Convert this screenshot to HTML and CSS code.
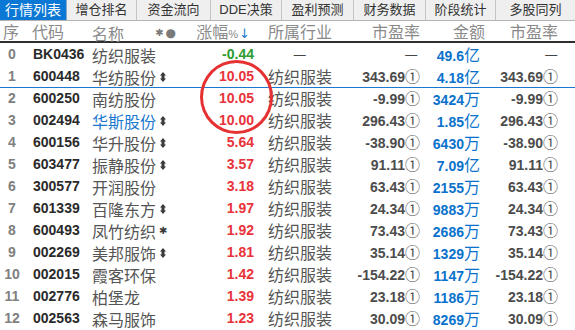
FILE: index.html
```html
<!DOCTYPE html>
<html lang="zh-CN">
<head>
    <meta charset="UTF-8">
    <title>行情列表</title>
    <link rel="stylesheet" href="styles.css">
</head>
<body>
    <div class="tabs">
        <div class="tab active" style="width:67px">行情列表</div>
        <div class="tab" style="width:70px">增仓排名</div>
        <div class="tab" style="width:74px">资金流向</div>
        <div class="tab" style="width:71px">DDE决策</div>
        <div class="tab" style="width:72px">盈利预测</div>
        <div class="tab" style="width:72px">财务数据</div>
        <div class="tab" style="width:70px">阶段统计</div>
        <div class="tab last">多股同列</div>
    </div>

    <div class="board">
        <div class="row head">
            <div class="c-no">序</div>
            <div class="c-code">代码</div>
            <div class="c-name"><span>名称</span><span class="flags"><span class="star">✱</span><span class="dot">●</span></span></div>
            <div class="c-pct">涨幅<span class="pct">%</span><span class="arrow">↓</span></div>
            <div class="c-ind">所属行业</div>
            <div class="c-pe">市盈率</div>
            <div class="c-amt">金额</div>
            <div class="c-pe2">市盈率</div>
        </div>

        <div class="row">
            <div class="c-no">0</div>
            <div class="c-code">BK0436</div>
            <div class="c-name">纺织服装</div>
            <div class="c-pct down">-0.44</div>
            <div class="c-ind dash mid">—</div>
            <div class="c-pe dash">—</div>
            <div class="c-amt">49.6<span class="unit">亿</span></div>
            <div class="c-pe2 dash">—</div>
        </div>
        <div class="row">
            <div class="c-no">1</div>
            <div class="c-code">600448</div>
            <div class="c-name">华纺股份<svg class="mark" width="6" height="10" viewBox="0 0 6 10"><path d="M3 0 L6 3.5 H0 Z M0 6.5 H6 L3 10 Z M1.5 3 H4.5 V7 H1.5 Z" fill="#3a3a3a"/></svg></div>
            <div class="c-pct up">10.05</div>
            <div class="c-ind">纺织服装</div>
            <div class="c-pe">343.69<span class="one">①</span></div>
            <div class="c-amt">4.18<span class="unit">亿</span></div>
            <div class="c-pe2">343.69<span class="one">①</span></div>
        </div>
        <div class="row cursor">
            <div class="c-no">2</div>
            <div class="c-code">600250</div>
            <div class="c-name">南纺股份</div>
            <div class="c-pct up">10.05</div>
            <div class="c-ind">纺织服装</div>
            <div class="c-pe">-9.99<span class="one">①</span></div>
            <div class="c-amt">3424<span class="unit">万</span></div>
            <div class="c-pe2">-9.99<span class="one">①</span></div>
        </div>
        <div class="row">
            <div class="c-no">3</div>
            <div class="c-code">002494</div>
            <div class="c-name blue">华斯股份<svg class="mark" width="6" height="10" viewBox="0 0 6 10"><path d="M3 0 L6 3.5 H0 Z M0 6.5 H6 L3 10 Z M1.5 3 H4.5 V7 H1.5 Z" fill="#3a3a3a"/></svg></div>
            <div class="c-pct up">10.00</div>
            <div class="c-ind">纺织服装</div>
            <div class="c-pe">296.43<span class="one">①</span></div>
            <div class="c-amt">1.85<span class="unit">亿</span></div>
            <div class="c-pe2">296.43<span class="one">①</span></div>
        </div>
        <div class="row">
            <div class="c-no">4</div>
            <div class="c-code">600156</div>
            <div class="c-name">华升股份<svg class="mark" width="6" height="10" viewBox="0 0 6 10"><path d="M3 0 L6 3.5 H0 Z M0 6.5 H6 L3 10 Z M1.5 3 H4.5 V7 H1.5 Z" fill="#3a3a3a"/></svg></div>
            <div class="c-pct up">5.64</div>
            <div class="c-ind">纺织服装</div>
            <div class="c-pe">-38.90<span class="one">①</span></div>
            <div class="c-amt">6430<span class="unit">万</span></div>
            <div class="c-pe2">-38.90<span class="one">①</span></div>
        </div>
        <div class="row">
            <div class="c-no">5</div>
            <div class="c-code">603477</div>
            <div class="c-name">振静股份<svg class="mark" width="6" height="10" viewBox="0 0 6 10"><path d="M3 0 L6 3.5 H0 Z M0 6.5 H6 L3 10 Z M1.5 3 H4.5 V7 H1.5 Z" fill="#3a3a3a"/></svg></div>
            <div class="c-pct up">3.57</div>
            <div class="c-ind">纺织服装</div>
            <div class="c-pe">91.11<span class="one">①</span></div>
            <div class="c-amt">7.09<span class="unit">亿</span></div>
            <div class="c-pe2">91.11<span class="one">①</span></div>
        </div>
        <div class="row">
            <div class="c-no">6</div>
            <div class="c-code">300577</div>
            <div class="c-name">开润股份</div>
            <div class="c-pct up">3.18</div>
            <div class="c-ind">纺织服装</div>
            <div class="c-pe">63.43<span class="one">①</span></div>
            <div class="c-amt">2155<span class="unit">万</span></div>
            <div class="c-pe2">63.43<span class="one">①</span></div>
        </div>
        <div class="row">
            <div class="c-no">7</div>
            <div class="c-code">601339</div>
            <div class="c-name">百隆东方<svg class="mark" width="6" height="10" viewBox="0 0 6 10"><path d="M3 0 L6 3.5 H0 Z M0 6.5 H6 L3 10 Z M1.5 3 H4.5 V7 H1.5 Z" fill="#3a3a3a"/></svg></div>
            <div class="c-pct up">1.97</div>
            <div class="c-ind">纺织服装</div>
            <div class="c-pe">24.34<span class="one">①</span></div>
            <div class="c-amt">9883<span class="unit">万</span></div>
            <div class="c-pe2">24.34<span class="one">①</span></div>
        </div>
        <div class="row">
            <div class="c-no">8</div>
            <div class="c-code">600493</div>
            <div class="c-name">凤竹纺织<span class="asterisk">✱</span></div>
            <div class="c-pct up">1.92</div>
            <div class="c-ind">纺织服装</div>
            <div class="c-pe">73.43<span class="one">①</span></div>
            <div class="c-amt">2686<span class="unit">万</span></div>
            <div class="c-pe2">73.43<span class="one">①</span></div>
        </div>
        <div class="row">
            <div class="c-no">9</div>
            <div class="c-code">002269</div>
            <div class="c-name">美邦服饰<svg class="mark" width="6" height="10" viewBox="0 0 6 10"><path d="M3 0 L6 3.5 H0 Z M0 6.5 H6 L3 10 Z M1.5 3 H4.5 V7 H1.5 Z" fill="#3a3a3a"/></svg></div>
            <div class="c-pct up">1.81</div>
            <div class="c-ind">纺织服装</div>
            <div class="c-pe">35.14<span class="one">①</span></div>
            <div class="c-amt">1329<span class="unit">万</span></div>
            <div class="c-pe2">35.14<span class="one">①</span></div>
        </div>
        <div class="row">
            <div class="c-no">10</div>
            <div class="c-code">002015</div>
            <div class="c-name">霞客环保</div>
            <div class="c-pct up">1.42</div>
            <div class="c-ind">纺织服装</div>
            <div class="c-pe">-154.22<span class="one">①</span></div>
            <div class="c-amt">1147<span class="unit">万</span></div>
            <div class="c-pe2">-154.22<span class="one">①</span></div>
        </div>
        <div class="row">
            <div class="c-no">11</div>
            <div class="c-code">002776</div>
            <div class="c-name">柏堡龙</div>
            <div class="c-pct up">1.39</div>
            <div class="c-ind">纺织服装</div>
            <div class="c-pe">23.18<span class="one">①</span></div>
            <div class="c-amt">1186<span class="unit">万</span></div>
            <div class="c-pe2">23.18<span class="one">①</span></div>
        </div>
        <div class="row">
            <div class="c-no">12</div>
            <div class="c-code">002563</div>
            <div class="c-name">森马服饰</div>
            <div class="c-pct up">1.23</div>
            <div class="c-ind">纺织服装</div>
            <div class="c-pe">30.09<span class="one">①</span></div>
            <div class="c-amt">8269<span class="unit">万</span></div>
            <div class="c-pe2">30.09<span class="one">①</span></div>
        </div>

        <div class="ring"></div>
    </div>
</body>
</html>
```

FILE: styles.css
```css
body {
    margin: 0;
    background: #fff;
    font-family: "Liberation Sans", "Noto Sans CJK SC", sans-serif;
    overflow: hidden;
}
.tabs {
    display: flex;
    height: 20px;
    background: #efefef;
    border-bottom: 1px solid #b4b4b4;
}
.tab {
    flex: none;
    line-height: 20px;
    text-align: center;
    font-family: "Liberation Sans", "Noto Sans CJK SC", sans-serif;
    font-size: 13px;
    color: #333;
    border-right: 1px solid #c4c4c4;
    box-sizing: border-box;
}
.tab.active {
    background: #0a78d4;
    color: #fff;
    font-size: 14px;
    border-right: 1px solid #8aa8c8;
}
.tab.last {
    flex: 1;
    border-right: none;
}

.board {
    position: relative;
}
.row {
    display: grid;
    grid-template-columns: 24px 64px 92px 76px 84px 80px 62px 78px;
    height: 22px;
    line-height: 22px;
    font-size: 14px;
    font-weight: bold;
    white-space: nowrap;
}
.row.head {
    height: 20px;
    line-height: 20px;
    border-bottom: 2px solid #2e2e2e;
    font-family: "Noto Sans CJK SC", sans-serif;
    font-size: 16px;
    font-weight: normal;
    color: #8a8a8a;
}
.row.cursor {
    box-shadow: inset 0 1px #1a78d0;
}

.c-no {
    text-align: center;
    color: #808080;
}
.c-code {
    padding-left: 9px;
    color: #2a2a2a;
}
.c-name {
    padding-left: 4px;
    font-family: "Noto Sans CJK SC", sans-serif;
    font-size: 16px;
    font-weight: normal;
    color: #555;
    display: flex;
    align-items: center;
}
.c-name.blue {
    color: #1a78d0;
}
.c-pct {
    text-align: right;
    padding-right: 2px;
}
.c-ind {
    padding-left: 12px;
    font-family: "Noto Sans CJK SC", sans-serif;
    font-size: 16px;
    font-weight: normal;
    color: #555;
}
.c-pe, .c-pe2 {
    text-align: right;
    color: #4c4c4c;
}
.c-amt {
    text-align: right;
    padding-right: 2px;
    color: #0a72cc;
}
.c-pe2 {
    padding-right: 2px;
}

.up { color: #e8333b; }
.down { color: #2f9a30; }

.one {
    font-family: "Noto Sans CJK SC", sans-serif;
    font-weight: normal;
    font-size: 15px;
}
.unit {
    font-family: "Noto Sans CJK SC", sans-serif;
    font-weight: normal;
    font-size: 16px;
}
.dash {
    font-family: "Noto Sans CJK SC", sans-serif;
    font-weight: normal;
    font-size: 15px;
    color: #444;
}
.c-ind.mid {
    padding-left: 37px;
}
.c-pe.dash {
    padding-right: 2px;
}

.mark {
    margin-left: 4px;
}
.asterisk {
    margin-left: 3px;
    font-family: "DejaVu Sans", sans-serif;
    font-size: 10px;
    color: #3a3a3a;
}

/* header tweaks */
.head .c-no {
    text-align: left;
    padding-left: 3px;
    color: #8a8a8a;
}
.head .c-code {
    padding-left: 8px;
    color: #8a8a8a;
}
.head .c-name {
    justify-content: space-between;
    color: #8a8a8a;
}
.head .flags {
    display: flex;
    align-items: center;
    gap: 2px;
    padding-right: 4px;
    font-family: "DejaVu Sans", sans-serif;
}
.head .star { font-size: 10px; color: #7a7a7a; }
.head .dot { font-size: 12px; color: #7a7a7a; }
.head .c-pct {
    padding-right: 6px;
    color: #8a8a8a;
}
.head .pct {
    font-family: "Liberation Sans", sans-serif;
    font-size: 11px;
}
.head .arrow {
    font-family: "DejaVu Sans", sans-serif;
    font-size: 13px;
    color: #1a78d0;
    margin-left: 1px;
}
.head .c-ind { color: #8a8a8a; }
.head .c-pe, .head .c-pe2 {
    color: #8a8a8a;
}
.head .c-amt {
    color: #8a8a8a;
    padding-right: 0;
    margin-right: -3px;
}

.ring {
    position: absolute;
    left: 200px;
    top: 39px;
    width: 67px;
    height: 68px;
    border: 3px solid #e63132;
    border-radius: 50%;
}
```
